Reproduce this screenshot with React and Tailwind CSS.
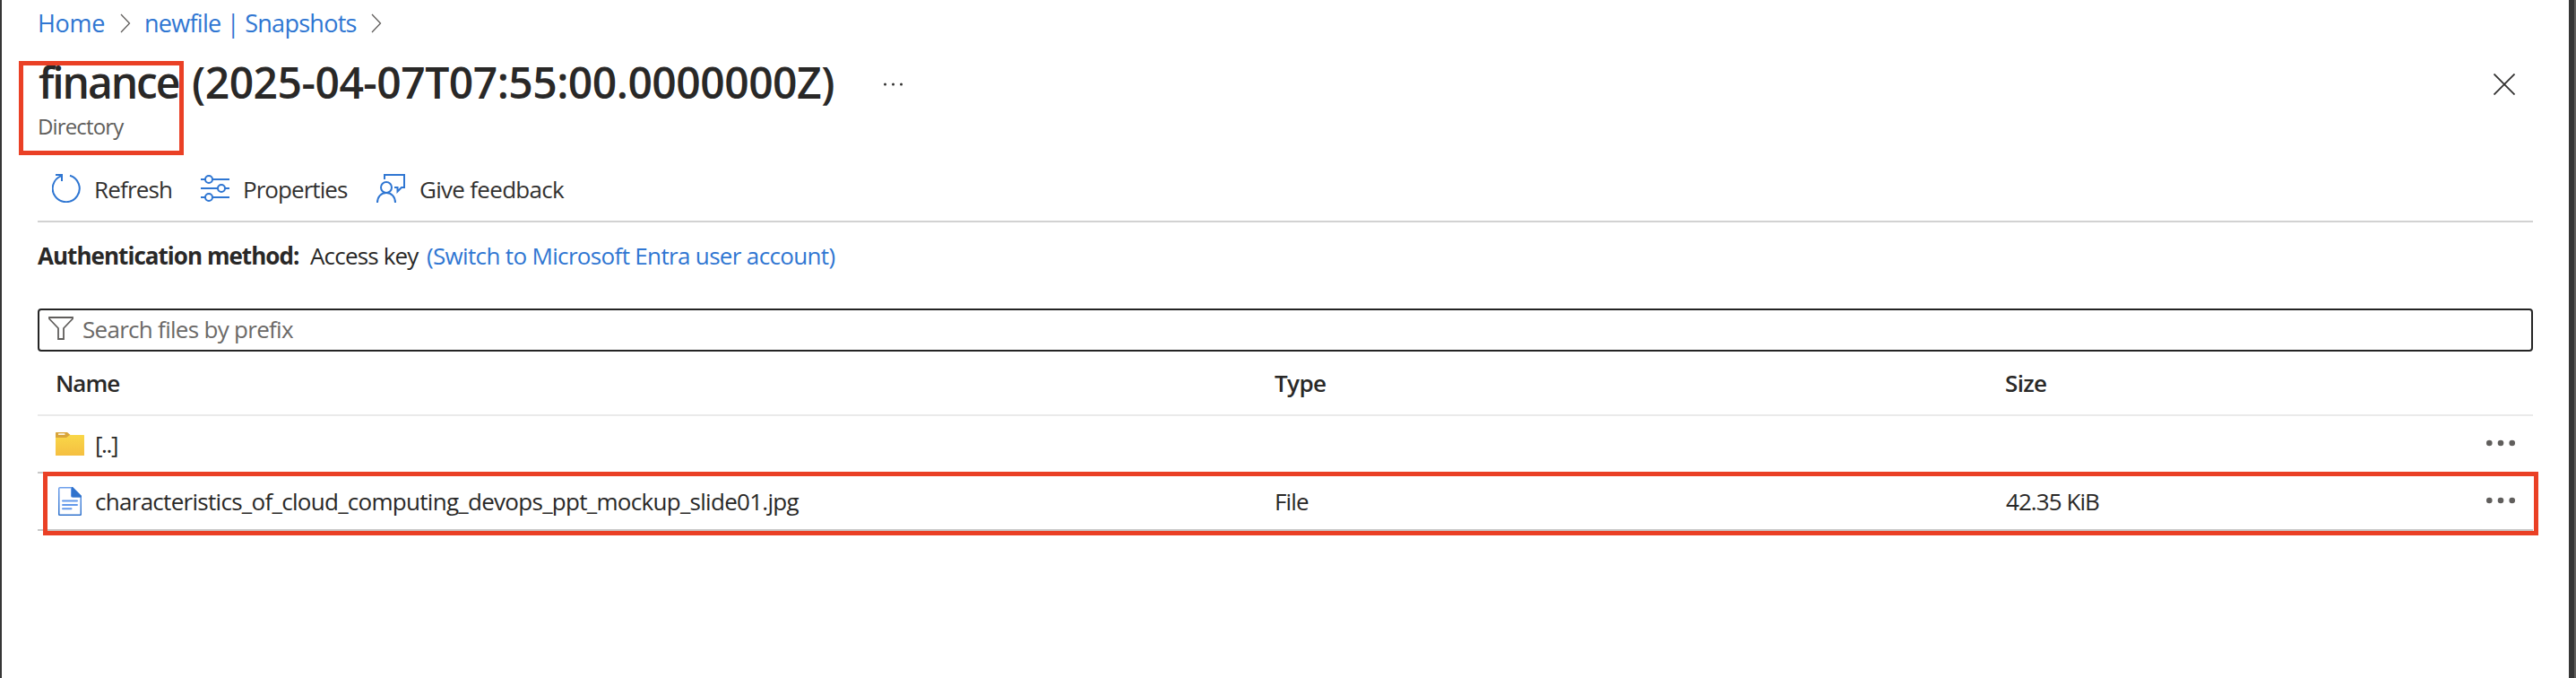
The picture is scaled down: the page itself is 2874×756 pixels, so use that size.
import React from 'react';

const files = [
    { name: '[..]', type: '', size: '', folder: true },
    {
        name: 'characteristics_of_cloud_computing_devops_ppt_mockup_slide01.jpg',
        type: 'File',
        size: '42.35 KiB',
        folder: false,
    },
];

function Chevron() {
    return (
        <svg width="12" height="22" viewBox="0 0 12 22" fill="none" stroke="#605e5c" strokeWidth="1.3">
            <path d="M1 1l9.5 10L1 21" />
        </svg>
    );
}

function RefreshIcon() {
    return (
        <svg width="32" height="32" viewBox="0 0 32 32" fill="none" stroke="#2f76d2" strokeWidth="2">
            <path d="M20 1.8a15 15 0 1 1-9.5.3" />
            <path d="M4 1h7v7" />
        </svg>
    );
}

function PropertiesIcon() {
    return (
        <svg width="32" height="32" viewBox="0 0 32 32" fill="none" stroke="#2f76d2" strokeWidth="2">
            <path d="M0 6h5M13 6h19M0 16h19M27 16h5M0 26h5M13 26h19" />
            <circle cx="9" cy="6" r="4" />
            <circle cx="23" cy="16" r="4" />
            <circle cx="9" cy="26" r="4" />
        </svg>
    );
}

function FeedbackIcon() {
    return (
        <svg width="32" height="32" viewBox="0 0 32 32" fill="none" stroke="#2f76d2" strokeWidth="2">
            <path d="M9 6V1h22v14h-3l-4.5 4.5V15H20" />
            <circle cx="11" cy="15" r="6" />
            <path d="M1 32c0-6.5 4-11 10-11s10 4.5 10 11" />
        </svg>
    );
}

function FilterIcon() {
    return (
        <svg width="28" height="26" viewBox="0 0 28 26" fill="none" stroke="#605e5c" strokeWidth="1.8">
            <path d="M1 1h26v1.5L17 13v12h-6V13L1 2.5z" />
        </svg>
    );
}

function FolderIcon() {
    return (
        <svg width="32" height="26" viewBox="0 0 32 26">
            <defs>
                <linearGradient id="folder" x1="0" y1="0" x2="0" y2="1">
                    <stop offset="0" stopColor="#f9d748" />
                    <stop offset="1" stopColor="#f5bf41" />
                </linearGradient>
            </defs>
            <path d="M0 .5Q0 0 .5 0H13l3.5 3-3 4H0z" fill="#d9a53a" />
            <rect x="3" y="1.2" width="7.5" height="1.8" rx=".5" fill="#fbf3e0" />
            <path d="M0 6h12l4-3h15.5q.5 0 .5.5v22q0 .5-.5.5H.5q-.5 0-.5-.5z" fill="url(#folder)" />
        </svg>
    );
}

function FileIcon() {
    return (
        <svg width="26" height="32" viewBox="0 0 26 32">
            <defs>
                <linearGradient id="page" x1="0" y1="0" x2="0" y2="1">
                    <stop offset="0" stopColor="#6ea0ec" />
                    <stop offset="1" stopColor="#2f72cc" />
                </linearGradient>
            </defs>
            <path d="M2 0h14l10 10v20.5Q26 32 24.5 32h-23Q0 32 0 30.5v-29Q0 0 2 0z" fill="url(#page)" />
            <path d="M1.5 1.5H14V10q0 1.5 1.5 1.5h9v19h-23z" fill="#fff" />
            <path d="M15 0h1l10 10v1.5h-9.5Q15 11.5 15 10z" fill="#2f72cc" />
            <path d="M5 15.5h16M5 20h16M5 24.3h9.5" stroke="#6399ea" strokeWidth="2" strokeLinecap="round" />
        </svg>
    );
}

function RowMenu() {
    return (
        <svg width="32" height="8" viewBox="0 0 32 8" fill="#605e5c">
            <circle cx="3.3" cy="4" r="3.3" />
            <circle cx="16" cy="4" r="3.3" />
            <circle cx="28.7" cy="4" r="3.3" />
        </svg>
    );
}

function Breadcrumb() {
    return (
        <nav className="flex h-[52px] items-center pl-10 text-[27px] leading-[52px] text-[#2f76d2]">
            <a className="w-[92px] tracking-[-0.3px]">Home</a>
            <Chevron />
            <a className="ml-[15px] w-[253px] tracking-[-0.72px]">newfile | Snapshots</a>
            <Chevron />
        </nav>
    );
}

function Header() {
    return (
        <header className="flex h-[100px] justify-between pr-[60px] pl-10">
            <div>
                <div className="flex h-[78px] items-center">
                    <h1 className="flex w-[943px] pt-0.5 pl-px text-[48px] leading-[78px] font-semibold whitespace-pre">
                        <span className="w-[171px] tracking-[-2.1px]">finance </span>
                        <span className="tracking-[-0.5px]">(2025-04-07T07:55:00.0000000Z)</span>
                    </h1>
                    <svg className="mt-1.5" width="24" height="4" viewBox="0 0 24 4" fill="#323130">
                        <circle cx="2.5" cy="2" r="1.5" />
                        <circle cx="11.5" cy="2" r="1.5" />
                        <circle cx="20.5" cy="2" r="1.5" />
                    </svg>
                </div>
                <p className="text-[24px] leading-[22px] tracking-[-0.85px] text-[#605e5c]">Directory</p>
            </div>
            <button className="mt-[30px] h-6 w-6">
                <svg width="24" height="24" viewBox="0 0 24 24" stroke="#323130" strokeWidth="1.8">
                    <path d="M.5.5l23 23M23.5.5l-23 23" />
                </svg>
            </button>
        </header>
    );
}

function Toolbar() {
    return (
        <div className="mx-10 mt-6 flex h-[72px] border-b-2 border-[#d2d2d2] pl-4 leading-[70px] text-[#323130]">
            <button className="flex w-[166px] gap-[15px] tracking-[-0.83px]">
                <span className="mt-[18px]"><RefreshIcon /></span>
                Refresh
            </button>
            <button className="flex w-[196px] gap-[15px] tracking-[-0.95px]">
                <span className="mt-[18px]"><PropertiesIcon /></span>
                Properties
            </button>
            <button className="flex gap-4 tracking-[-0.7px]">
                <span className="mt-[18px]"><FeedbackIcon /></span>
                Give feedback
            </button>
        </div>
    );
}

function FileTable() {
    return (
        <div>
            <div className="flex h-[72px] border-b-2 border-[#eaeaea] pl-5 leading-[70px] font-semibold">
                <div className="w-[1360px] tracking-[-1px]">Name</div>
                <div className="w-[815px] tracking-[-0.6px]">Type</div>
                <div className="tracking-[-0.66px]">Size</div>
            </div>
            {files.map((file) => (
                <div key={file.name} className="flex h-16 items-center border-b-2 border-[#c8c8c8] pr-5 pl-5 leading-[62px]">
                    <div className="flex w-[1360px] items-center">
                        <span className="w-11">
                            {file.folder ? <FolderIcon /> : <span className="flex pl-[3px]"><FileIcon /></span>}
                        </span>
                        <span className={file.folder ? 'tracking-[-1.4px]' : 'tracking-[-0.71px]'}>{file.name}</span>
                    </div>
                    <div className="w-[816px] tracking-[-0.85px]">{file.type}</div>
                    <div className="flex-1 tracking-[-0.94px]">{file.size}</div>
                    <button className="pb-0.5"><RowMenu /></button>
                </div>
            ))}
        </div>
    );
}

export default function App() {
    return (
        <div className="relative h-[756px] w-[2874px] overflow-hidden bg-[#605e5c] pr-0.5 font-['Open_Sans','Noto_Sans',sans-serif] text-[26px] text-[#292827]">
            <div className="h-full border-r-[6px] border-l-2 border-[#363636] bg-white">
                <Breadcrumb />
                <Header />
                <Toolbar />
                <main className="mx-10">
                    <div className="flex h-[75px] leading-[75px]">
                        <span className="w-[304px] font-bold tracking-[-0.96px]">Authentication method:</span>
                        <span className="w-[130px] tracking-[-0.82px]">Access key</span>
                        <a className="tracking-[-0.66px] text-[#2f76d2]">(Switch to Microsoft Entra user account)</a>
                    </div>
                    <div className="mt-[21px] flex h-12 items-center rounded border-2 border-[#242424] pl-[10px] text-[#6b6967]">
                        <span className="-mt-1"><FilterIcon /></span>
                        <span className="ml-[10px] pb-0.5 leading-[42px] tracking-[-0.71px]">Search files by prefix</span>
                    </div>
                    <FileTable />
                </main>
            </div>

            {/* Highlight frames */}
            <div className="absolute top-[68px] left-[21px] h-[105px] w-[184px] border-5 border-[#ea4025]" />
            <div className="absolute top-[526px] left-[48px] h-[71px] w-[2784px] border-5 border-[#ea4025]" />
        </div>
    );
}
